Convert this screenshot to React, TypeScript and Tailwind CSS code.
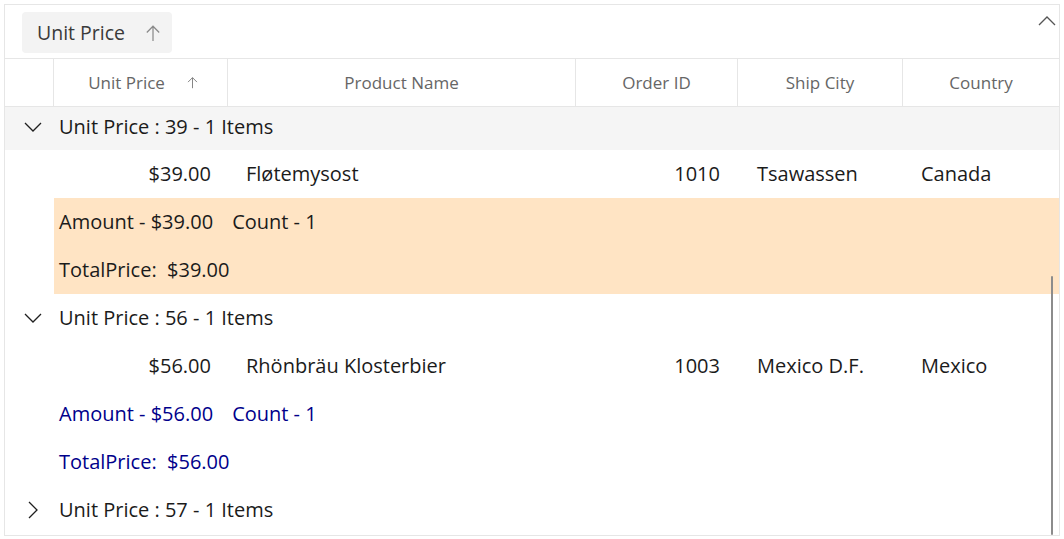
import React from 'react';

const cols = 'grid grid-cols-[49px_174px_348px_162px_165px_156px]';

function Chevron({ dir }: { dir: 'down' | 'right' | 'up' }) {
  const d =
    dir === 'down' ? 'M1 5 L9 13 L17 5' : dir === 'up' ? 'M1 12 L9 4 L17 12' : 'M5 1 L13 9 L5 17';
  return (
    <svg width="18" height="18" viewBox="0 0 18 18" fill="none">
      <path d={d} stroke="currentColor" strokeWidth="1.3" strokeLinejoin="miter" />
    </svg>
  );
}

function ArrowUp({ size = 16 }: { size?: number }) {
  return (
    <svg width={size} height={size} viewBox="0 0 16 16" fill="none">
      <path d="M8 15 V2 M2.5 7.5 L8 2 L13.5 7.5" stroke="currentColor" strokeWidth="1.1" />
    </svg>
  );
}

function Caption({ text, open, h = 'h-[48px]', bg = '' }: { text: string; open: boolean; h?: string; bg?: string }) {
  return (
    <div className={`flex items-center ${h} ${bg}`}>
      <div className="w-[54px] flex justify-center pl-[2px] text-[#1f1f1f]">
        <Chevron dir={open ? 'down' : 'right'} />
      </div>
      <span className="text-[20px] text-[#1b1b1b]">{text}</span>
    </div>
  );
}

function DataRow({ price, name, id, city, country }: { price: string; name: string; id: string; city: string; country: string }) {
  return (
    <div className={`${cols} h-[48px] items-center text-[20px] text-[#1b1b1b]`}>
      <div />
      <div className="text-right pr-[17px]">{price}</div>
      <div className="pl-[18px]">{name}</div>
      <div className="text-right pr-[18px]">{id}</div>
      <div className="pl-[19px]">{city}</div>
      <div className="pl-[18px]">{country}</div>
    </div>
  );
}

function Summary({ amount, blue, bg }: { amount: string; blue?: boolean; bg?: boolean }) {
  const color = blue ? 'text-[#00008b]' : 'text-[#1b1b1b]';
  return (
    <div className="flex">
      <div className="w-[49px]" />
      <div className={`flex-1 ${bg ? 'bg-[#ffe4c4]' : ''} ${color} text-[20px]`}>
        <div className="h-[48px] flex items-center pl-[5px] gap-[19px]">
          <span>Amount - {amount}</span>
          <span>Count - 1</span>
        </div>
        <div className="h-[48px] flex items-center pl-[5px]">
          <span>TotalPrice:&nbsp; {amount}</span>
        </div>
      </div>
    </div>
  );
}

export default function App() {
  const headers = ['Product Name', 'Order ID', 'Ship City', 'Country'];
  return (
    <div className="w-[1064px] h-[539px] bg-white pt-[4px] pl-[4px] font-['Open_Sans',sans-serif]">
      <div className="relative w-[1056px] h-[532px] border border-[#e6e6e6] overflow-hidden">
        {/* group drop area */}
        <div className="h-[54px] border-b border-[#e6e6e6] flex items-start pt-[7px] pl-[17px] relative">
          <div className="h-[41px] w-[150px] rounded-[4px] bg-[#f3f3f3] flex items-center pl-[15px] text-[#3a3a3a]">
            <span className="text-[19.5px]">Unit Price</span>
            <span className="ml-auto mr-[10px] text-[#8a8a8a]">
              <ArrowUp size={18} />
            </span>
          </div>
          <div className="absolute right-[3px] top-[8px] text-[#555]">
            <Chevron dir="up" />
          </div>
        </div>

        {/* header */}
        <div className={`${cols} h-[48px] border-b border-[#e6e6e6] text-[17px] text-[#666]`}>
          <div className="border-r border-[#e6e6e6]" />
          <div className="border-r border-[#e6e6e6] flex items-center justify-center gap-[21px] pl-[6px]">
            <span>Unit Price</span>
            <span className="text-[#777]">
              <ArrowUp size={13} />
            </span>
          </div>
          {headers.map((h, i) => (
            <div
              key={h}
              className={`flex items-center justify-center ${i < headers.length - 1 ? 'border-r border-[#e6e6e6]' : ''}`}
            >
              {h}
            </div>
          ))}
        </div>

        <Caption text="Unit Price : 39 - 1 Items" open h="h-[43px] pb-[4px]" bg="bg-[#f5f5f5]" />
        <DataRow price="$39.00" name="Fløtemysost" id="1010" city="Tsawassen" country="Canada" />
        <Summary amount="$39.00" bg />
        <Caption text="Unit Price : 56 - 1 Items" open />
        <DataRow price="$56.00" name="Rhönbräu Klosterbier" id="1003" city="Mexico D.F." country="Mexico" />
        <Summary amount="$56.00" blue />
        <Caption text="Unit Price : 57 - 1 Items" open={false} />

        {/* scrollbar */}
        <div className="absolute right-[6px] top-[271px] bottom-0 w-[2px] bg-[#8c8c8c] rounded-full" />
      </div>
    </div>
  );
}
